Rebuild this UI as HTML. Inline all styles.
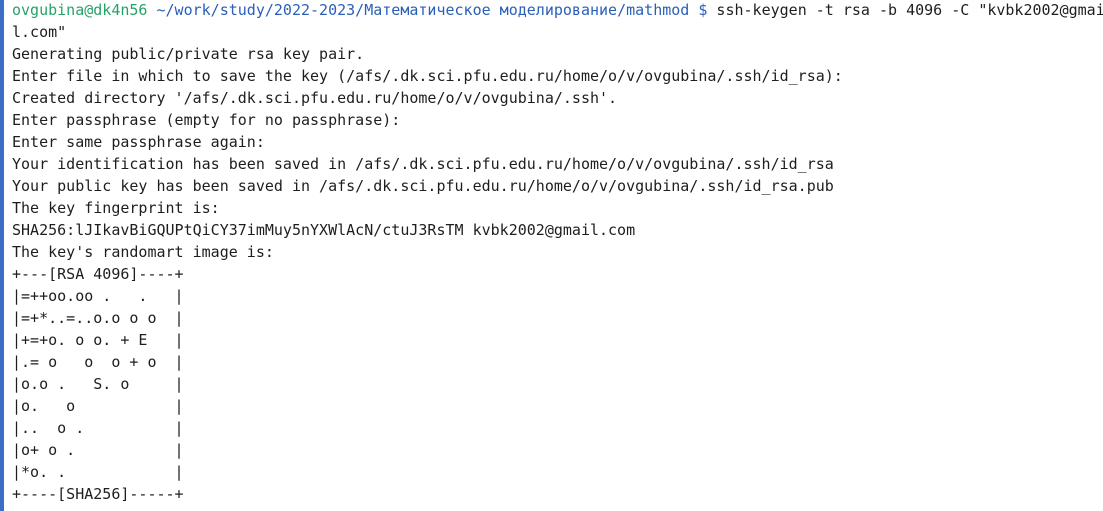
<!DOCTYPE html>
<html><head><meta charset="utf-8"><style>
html,body{margin:0;padding:0;background:#fff;width:1103px;height:511px;overflow:hidden}
.bar{position:absolute;left:0;top:0;width:4px;height:511px;background:#3a6fc4}
pre{position:absolute;left:12px;top:-1px;margin:0;font-family:"DejaVu Sans Mono","Liberation Mono","Noto Sans CJK SC",monospace;font-size:15px;line-height:22px;color:#1e1e1e;white-space:pre}
.g{color:#26a269}.b{color:#2a5fb8}
</style></head><body><div class="bar"></div>
<pre><span class="g">ovgubina@dk4n56</span> <span class="b">~/work/study/2022-2023/Математическое моделирование/mathmod $</span> ssh-keygen -t rsa -b 4096 -C "kvbk2002@gmai
l.com"
Generating public/private rsa key pair.
Enter file in which to save the key (/afs/.dk.sci.pfu.edu.ru/home/o/v/ovgubina/.ssh/id_rsa):
Created directory '/afs/.dk.sci.pfu.edu.ru/home/o/v/ovgubina/.ssh'.
Enter passphrase (empty for no passphrase):
Enter same passphrase again:
Your identification has been saved in /afs/.dk.sci.pfu.edu.ru/home/o/v/ovgubina/.ssh/id_rsa
Your public key has been saved in /afs/.dk.sci.pfu.edu.ru/home/o/v/ovgubina/.ssh/id_rsa.pub
The key fingerprint is:
SHA256:lJIkavBiGQUPtQiCY37imMuy5nYXWlAcN/ctuJ3RsTM kvbk2002@gmail.com
The key's randomart image is:
+---[RSA 4096]----+
|=++oo.oo .   .   |
|=+*..=..o.o o o  |
|+=+o. o o. + E   |
|.= o   o  o + o  |
|o.o .   S. o     |
|o.   o           |
|..  o .          |
|o+ o .           |
|*o. .            |
+----[SHA256]-----+</pre>
</body></html>
